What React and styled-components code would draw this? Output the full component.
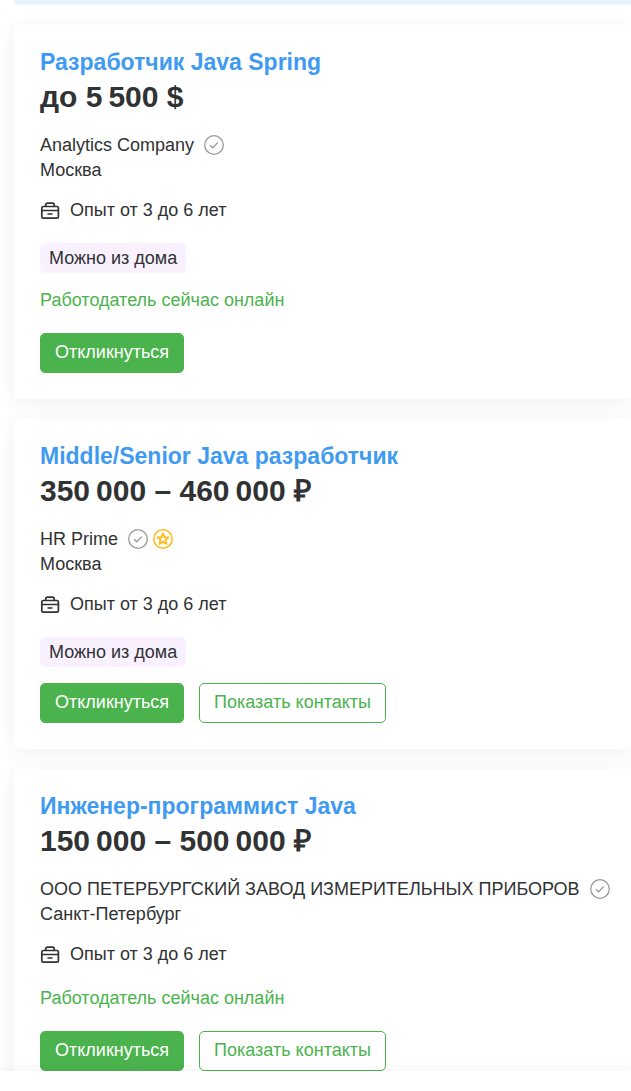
import React from "react";
import styled, { createGlobalStyle } from "styled-components";

const GlobalStyle = createGlobalStyle`
  * { box-sizing: border-box; }
  body {
    margin: 0;
    background: #fff;
    color: #303233;
    font: 18px/26px "Liberation Sans", Arial, sans-serif;
    overflow: hidden;
  }
`;

const Page = styled.main`
  height: 100vh;
  overflow: hidden;
  padding-left: 14px;
`;

const Banner = styled.div`
  height: 5px;
  margin-bottom: 20px;
  background: #e7f3ff;
  border-radius: 0 0 0 4px;
`;

const List = styled.div`
  display: flex;
  flex-direction: column;
  gap: 20px;
`;

const Card = styled.article`
  padding: 22px 26px 26px;
  background: #fff;
  border-radius: 5px 0 0 5px;
  box-shadow: 0 4px 20px rgba(48, 50, 51, 0.07);
`;

const Title = styled.h2`
  margin: 0;
  font-size: 23px;
  line-height: 30px;
`;

const TitleLink = styled.a`
  color: #3f9af1;
  text-decoration: none;
`;

const Salary = styled.div`
  font-size: 30px;
  font-weight: 700;
  line-height: 40px;
`;

const Company = styled.div`
  display: flex;
  align-items: center;
  gap: 5px;
  height: 25px;
  margin-top: 15px;

  svg { flex-shrink: 0; }
`;

const CompanyName = styled.span`
  margin-right: 5px;
  white-space: nowrap;
`;

const City = styled.div`
  line-height: 26px;
`;

const Experience = styled.div`
  display: flex;
  align-items: center;
  gap: 10px;
  margin: 14px 0 20px;
`;

const Tag = styled.div`
  width: fit-content;
  padding: 0 9px;
  line-height: 30px;
  background: #f9f1ff;
  border-radius: 5px;
  margin-bottom: 16px;
`;

const Online = styled.div`
  color: #4bb34e;
  line-height: 22px;
  margin-bottom: 22px;
`;

const Actions = styled.div`
  display: flex;
  gap: 15px;
`;

const Button = styled.button`
  height: 40px;
  padding: 0 14px 2px;
  border: 1px solid #4bb34e;
  border-radius: 5px;
  background: ${(p) => (p.$primary ? "#4bb34e" : "#fff")};
  color: ${(p) => (p.$primary ? "#fff" : "#4bb34e")};
  font: inherit;
  white-space: nowrap;
`;

const BottomBar = styled.footer`
  position: fixed;
  inset: auto 0 0;
  height: 20px;
  background: #fff;
  box-shadow: 0 0 12px rgba(48, 50, 51, 0.08);
`;

const CheckIcon = () => (
  <svg width="20" height="20" viewBox="0 0 20 20" fill="none" stroke="#999" strokeWidth="1.3" aria-label="Проверенная компания">
    <circle cx="10" cy="10" r="9.3" />
    <path d="M6 10.2l2.7 2.6 5-5.2" />
  </svg>
);

const StarIcon = () => (
  <svg width="20" height="20" viewBox="0 0 20 20" fill="none" stroke="#fdba12" strokeLinejoin="round" aria-label="Рейтинг компании">
    <circle cx="10" cy="10" r="9.2" strokeWidth="1.5" />
    <path d="M10 4.200l1.700 3.700 4 .4-3 2.700.9 4-3.600-2-3.600 2 .9-4-3-2.700 4-.4z" strokeWidth="1.5" />
    <path d="M8.300 8h3.400l1 3-2.700 2-2.700-2z" strokeWidth="1" />
  </svg>
);

const BriefcaseIcon = () => (
  <svg width="20" height="20" viewBox="0 0 20 20" fill="none" stroke="#303233" strokeWidth="1.7" aria-hidden="true">
    <rect x="1.800" y="6.500" width="16.600" height="11.700" rx="1.500" />
    <path d="M5.700 6.500V5.200a2 2 0 0 1 2-2h4.600a2 2 0 0 1 2 2v1.300M1.800 10.500h16.600M7.500 14h5" />
  </svg>
);

const vacancies = [
  {
    title: "Разработчик Java Spring",
    salary: "до 5\u202f500 $",
    company: "Analytics Company",
    city: "Москва",
    remote: true,
    online: true,
  },
  {
    title: "Middle/Senior Java разработчик",
    salary: "350\u202f000 – 460\u202f000 ₽",
    company: "HR Prime",
    city: "Москва",
    starred: true,
    remote: true,
    contacts: true,
  },
  {
    title: "Инженер-программист Java",
    salary: "150\u202f000 – 500\u202f000 ₽",
    company: "ООО ПЕТЕРБУРГСКИЙ ЗАВОД ИЗМЕРИТЕЛЬНЫХ ПРИБОРОВ",
    city: "Санкт-Петербург",
    online: true,
    contacts: true,
  },
];

const Vacancy = ({ item }) => (
  <Card>
    <Title><TitleLink href="#">{item.title}</TitleLink></Title>
    <Salary>{item.salary}</Salary>
    <Company>
      <CompanyName>{item.company}</CompanyName>
      <CheckIcon />
      {item.starred && <StarIcon />}
    </Company>
    <City>{item.city}</City>
    <Experience><BriefcaseIcon />Опыт от 3 до 6 лет</Experience>
    {item.remote && <Tag>Можно из дома</Tag>}
    {item.online && <Online>Работодатель сейчас онлайн</Online>}
    <Actions>
      <Button type="button" $primary>Откликнуться</Button>
      {item.contacts && <Button type="button">Показать контакты</Button>}
    </Actions>
  </Card>
);

export default function App() {
  return (
    <>
      <GlobalStyle />
      <Page>
        <Banner />
        <List>
          {vacancies.map((item) => <Vacancy key={item.title} item={item} />)}
        </List>
      </Page>
      <BottomBar />
    </>
  );
}
